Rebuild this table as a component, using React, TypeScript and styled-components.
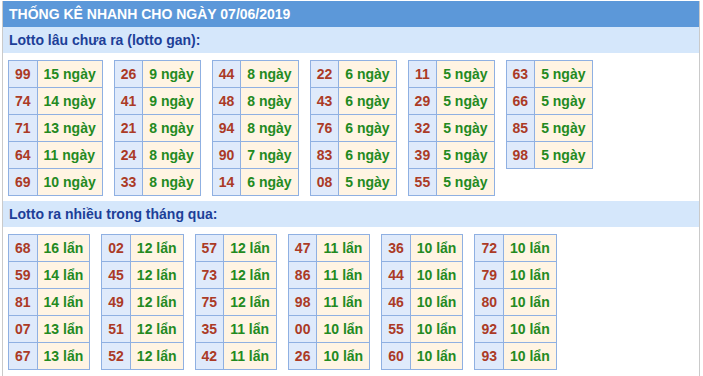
import React from "react";
import styled, { createGlobalStyle } from "styled-components";

const GlobalStyle = createGlobalStyle`
  body {
    margin: 0;
    background: #ffffff;
    font-family: "Liberation Sans", Arial, sans-serif;
  }
`;

const Box = styled.div`
  margin: 1px 0 0 2px;
  width: 696px;
  height: 375px;
  border-left: 1px solid #cacaca;
  border-right: 1px solid #cacaca;
  box-sizing: content-box;
`;

const Header = styled.div`
  height: 26px;
  line-height: 26px;
  padding-left: 6px;
  background: #5c98d9;
  color: #ffffff;
  font-size: 14px;
  font-weight: bold;
`;

const SubHeader = styled.div<{ $top: number }>`
  margin-top: ${p => p.$top}px;
  height: 26px;
  line-height: 26px;
  padding-left: 6px;
  background: #d5e7fb;
  color: #1d3f98;
  font-size: 14px;
  font-weight: bold;
`;

const TableRow = styled.div`
  display: flex;
  align-items: flex-start;
  gap: 11px;
  padding: 7px 0 0 5px;
`;

const StyledTable = styled.table`
  border-collapse: collapse;
  font-size: 14px;
  font-weight: bold;
`;

const NumTd = styled.td`
  border: 1px solid #8fb0e2;
  background: #dfeafb;
  color: #ab3a26;
  height: 26px;
  padding: 0 6px;
  text-align: center;
  box-sizing: border-box;
`;

const ValueTd = styled.td`
  border: 1px solid #8fb0e2;
  background: #fff4e3;
  color: #238a1f;
  height: 26px;
  padding: 0 6px;
  white-space: nowrap;
`;

const ganData: [string, number][][] = [
  [["99", 15], ["74", 14], ["71", 13], ["64", 11], ["69", 10]],
  [["26", 9], ["41", 9], ["21", 8], ["24", 8], ["33", 8]],
  [["44", 8], ["48", 8], ["94", 8], ["90", 7], ["14", 6]],
  [["22", 6], ["43", 6], ["76", 6], ["83", 6], ["08", 5]],
  [["11", 5], ["29", 5], ["32", 5], ["39", 5], ["55", 5]],
  [["63", 5], ["66", 5], ["85", 5], ["98", 5]],
];

const nhieuData: [string, number][][] = [
  [["68", 16], ["59", 14], ["81", 14], ["07", 13], ["67", 13]],
  [["02", 12], ["45", 12], ["49", 12], ["51", 12], ["52", 12]],
  [["57", 12], ["73", 12], ["75", 12], ["35", 11], ["42", 11]],
  [["47", 11], ["86", 11], ["98", 11], ["00", 10], ["26", 10]],
  [["36", 10], ["44", 10], ["46", 10], ["55", 10], ["60", 10]],
  [["72", 10], ["79", 10], ["80", 10], ["92", 10], ["93", 10]],
];

interface GroupProps {
  rows: [string, number][];
  unit: string;
}

const Group = ({ rows, unit }: GroupProps) => (
  <StyledTable>
    <tbody>
      {rows.map(([num, count]) => (
        <tr key={num}>
          <NumTd>{num}</NumTd>
          <ValueTd>{count} {unit}</ValueTd>
        </tr>
      ))}
    </tbody>
  </StyledTable>
);

export default function App() {
  return (
    <>
      <GlobalStyle />
      <Box>
        <Header>THỐNG KÊ NHANH CHO NGÀY 07/06/2019</Header>
        <SubHeader $top={0}>Lotto lâu chưa ra (lotto gan):</SubHeader>
        <TableRow>
          {ganData.map((rows, i) => (
            <Group key={i} rows={rows} unit="ngày" />
          ))}
        </TableRow>
        <SubHeader $top={5}>Lotto ra nhiều trong tháng qua:</SubHeader>
        <TableRow>
          {nhieuData.map((rows, i) => (
            <Group key={i} rows={rows} unit="lẩn" />
          ))}
        </TableRow>
      </Box>
    </>
  );
}
